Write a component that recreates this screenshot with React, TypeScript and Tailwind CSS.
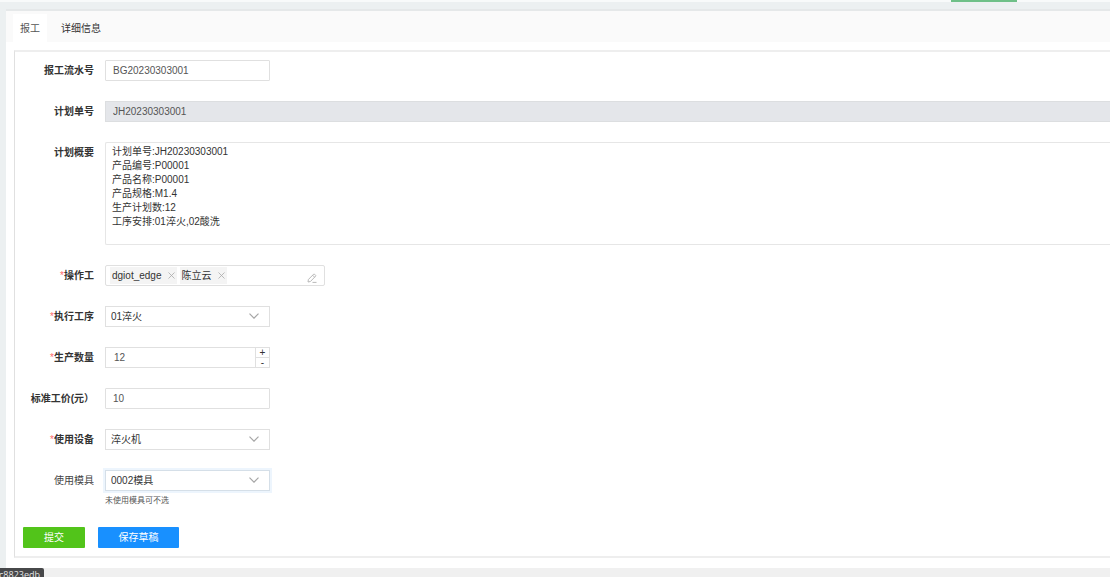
import { useState, type ReactNode } from 'react'

const inputClass =
  'block h-[21px] w-[165px] rounded-[1px] border border-[#e0e0e0] bg-white px-[7px] text-[10px] text-[#555] outline-none'

function FormRow({ label, id, required, light, children }: {
  label: string
  id: string
  required?: boolean
  light?: boolean
  children: ReactNode
}) {
  return (
    <div className="flex items-start gap-[11px]">
      <label
        htmlFor={id}
        className={`w-[71px] shrink-0 text-right leading-[21px] whitespace-nowrap ${
          light ? 'text-[#444]' : 'font-bold text-[#333]'
        }`}
      >
        {required && <span className="font-normal text-[#ff6b6b]">*</span>}
        {label}
      </label>
      <div className="min-w-0 flex-1">{children}</div>
    </div>
  )
}

function SelectBox({ id, value, focused }: { id: string; value: string; focused?: boolean }) {
  return (
    <div className="relative w-[165px]">
      <select
        id={id}
        defaultValue={value}
        className={`block h-[21px] w-full appearance-none border bg-white px-[5px] text-[10px] text-[#333] outline-none ${
          focused ? 'border-[#d5dfe8] ring-2 ring-[#edf5fd]' : 'border-[#e0e0e0]'
        }`}
      >
        <option value={value}>{value}</option>
      </select>
      <svg
        viewBox="0 0 10 6"
        className="pointer-events-none absolute top-[7px] right-[11px] h-[6px] w-[10px]"
        fill="none"
        stroke="#a6a6a6"
        strokeWidth="1.2"
      >
        <path d="M0.5 0.7 5 5.2 9.5 0.7" />
      </svg>
    </div>
  )
}

function Tag({ name, onRemove }: { name: string; onRemove: () => void }) {
  return (
    <span className="flex h-[17px] items-center gap-[6px] bg-[#f4f4f4] pr-[2px] pl-[2px] text-[#333]">
      {name}
      <button type="button" aria-label={`移除 ${name}`} onClick={onRemove}>
        <svg viewBox="0 0 7 7" className="block h-[7px] w-[7px]" stroke="#aaa" strokeWidth="0.8">
          <path d="M0.5 0.5 6.5 6.5M6.5 0.5 0.5 6.5" />
        </svg>
      </button>
    </span>
  )
}

const summary = [
  '计划单号:JH20230303001',
  '产品编号:P00001',
  '产品名称:P00001',
  '产品规格:M1.4',
  '生产计划数:12',
  '工序安排:01淬火,02酸洗',
].join('\n')

export default function App() {
  const [workers, setWorkers] = useState(['dgiot_edge', '陈立云'])
  const [count, setCount] = useState(12)
  const [tab, setTab] = useState('报工')

  return (
    <div className="relative flex min-h-screen flex-col overflow-hidden bg-[#f0f0f0] font-['Liberation_Sans','Noto_Sans_CJK_SC',sans-serif] text-[10px]">
      {/* Header edge */}
      <div className="flex h-[2px] items-start justify-end bg-[#f8fafa] pr-[93px]">
        <div className="h-[2px] w-[66px] bg-[#6fc088]" />
      </div>

      <div className="bg-[#ecf0f1] pt-[7px] pl-[6px]">
        <main className="border-t-2 border-[#e5e8e9] bg-white pb-[10px]">
          {/* Tabs */}
          <div role="tablist" className="flex h-[31px] items-end bg-[#fafafa] pl-[7px]">
            {['报工', '详细信息'].map((name) => (
              <button
                key={name}
                type="button"
                role="tab"
                aria-selected={tab === name}
                onClick={() => setTab(name)}
                className={`h-[28px] ${tab === name ? 'bg-white px-[7px] text-[#555]' : 'px-[14px] text-[#333]'}`}
              >
                {name}
              </button>
            ))}
          </div>

          <form
            onSubmit={(e) => e.preventDefault()}
            className="mt-2 ml-2 border-y-2 border-l border-y-[#eeeeee] border-l-[#e0e0e0] pt-[8px] pb-[8px] pl-2"
          >
            <div className="space-y-5">
              <FormRow label="报工流水号" id="serial">
                <input id="serial" defaultValue="BG20230303001" className={inputClass} />
              </FormRow>
              <FormRow label="计划单号" id="plan">
                <input
                  id="plan"
                  readOnly
                  value="JH20230303001"
                  className="block h-[21px] w-full border-y border-l border-[#dcdee0] bg-[#e4e6ea] px-[7px] text-[#555] outline-none"
                />
              </FormRow>
              <FormRow label="计划概要" id="summary">
                <textarea
                  id="summary"
                  defaultValue={summary}
                  className="block h-[103px] w-full resize-none rounded-l-xs border-y border-l border-[#e6e6e6] px-[6px] py-[2px] leading-[14px] text-[#333] outline-none"
                />
              </FormRow>
              <FormRow label="操作工" id="workers" required>
                <div className="flex h-[21px] w-[220px] items-center gap-[3px] rounded-xs border border-[#e0e0e0] pr-[7px] pl-1">
                  {workers.map((name) => (
                    <Tag key={name} name={name} onRemove={() => setWorkers(workers.filter((w) => w !== name))} />
                  ))}
                  <button type="button" id="workers" aria-label="编辑操作工" className="mt-1 ml-auto">
                    <svg viewBox="0 0 10 10" className="block h-[10px] w-[10px]" fill="none" stroke="#b0b0b0" strokeWidth="0.9">
                      <path d="M1 9 1.4 6.5 6.6 1.2Q7 0.8 7.5 1.2L8.6 2.3Q9 2.8 8.6 3.2L3.4 8.5ZM5.6 2.2 7.6 4.2M5.5 9.4H9.5" />
                    </svg>
                  </button>
                </div>
              </FormRow>
              <FormRow label="执行工序" id="process" required>
                <SelectBox id="process" value="01淬火" />
              </FormRow>
              <FormRow label="生产数量" id="count" required>
                <div className="flex h-[21px] w-[165px] border border-[#e0e0e0]">
                  <input
                    id="count"
                    inputMode="numeric"
                    value={count}
                    onChange={(e) => setCount(Number(e.target.value) || 0)}
                    className="min-w-0 flex-1 px-2 text-[#555] outline-none"
                  />
                  <div className="flex w-[14px] flex-col border-l border-[#e0e0e0] leading-[9px] text-[#333]">
                    <button type="button" className="h-[10px] border-b border-[#e0e0e0]" onClick={() => setCount(count + 1)}>
                      +
                    </button>
                    <button type="button" className="h-[9px]" onClick={() => setCount(count - 1)}>
                      -
                    </button>
                  </div>
                </div>
              </FormRow>
              <FormRow label="标准工价(元）" id="price">
                <input id="price" defaultValue="10" className={inputClass} />
              </FormRow>
              <FormRow label="使用设备" id="device" required>
                <SelectBox id="device" value="淬火机" />
              </FormRow>
              <FormRow label="使用模具" id="mold" light>
                <SelectBox id="mold" value="0002模具" focused />
                <p className="mt-1 text-[8px] leading-[12px] text-[#555]">未使用模具可不选</p>
              </FormRow>
            </div>

            {/* Actions */}
            <div className="mt-5 flex gap-[13px] text-white">
              <button type="submit" className="h-[21px] w-[62px] rounded-[1px] bg-[#52c41a]">
                提交
              </button>
              <button type="button" className="h-[21px] w-[81px] rounded-[1px] bg-[#1890ff]">
                保存草稿
              </button>
            </div>
          </form>
        </main>
      </div>

      {/* Link status bubble */}
      <div className="absolute bottom-0 left-0 flex h-[9px] w-[44px] justify-end overflow-hidden rounded-tr-xs bg-[#47484a] pr-1 font-['Open_Sans',sans-serif] text-[9px] leading-[14px] whitespace-nowrap text-[#e4e4e4]">
        5c8823edb
      </div>
    </div>
  )
}
